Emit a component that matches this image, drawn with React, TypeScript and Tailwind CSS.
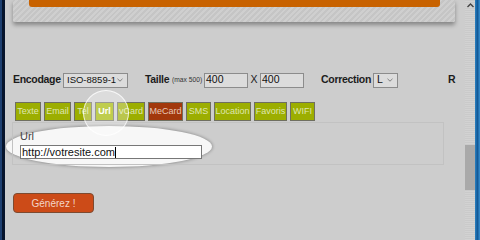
import React from "react"

const tabs = [
  { label: "Texte", w: "w-[26px]" },
  { label: "Email", w: "w-[27px]" },
  { label: "Tel", w: "w-[18px]" },
  { label: "Url", w: "w-[19px]", active: true },
  { label: "vCard", w: "w-[28px]" },
  { label: "MeCard", w: "w-[35px]", red: true },
  { label: "SMS", w: "w-[25px]" },
  { label: "Location", w: "w-[37px]" },
  { label: "Favoris", w: "w-[33px]" },
  { label: "WIFI", w: "w-[25px]" },
]

function Tab({ label, w, active, red }: { label: string; w: string; active?: boolean; red?: boolean }) {
  const color = red
    ? "bg-[#a2380c] text-[#e8c8b8]"
    : active
      ? "bg-[#a4b800] text-white font-bold"
      : "bg-[#9cae00] text-[#dfe6b0]"
  return (
    <div
      className={`${w} h-[19px] shrink-0 flex items-center justify-center border border-[#6f6f60] text-[9px] leading-none ${color}`}
    >
      {label}
    </div>
  )
}

function Chevron() {
  return (
    <svg width="6" height="4" viewBox="0 0 6 4" className="shrink-0">
      <path d="M0.5 0.8 L3 3.2 L5.5 0.8" stroke="#777" strokeWidth="0.9" fill="none" />
    </svg>
  )
}

export default function App() {
  return (
    <div className="w-[480px] h-[240px] flex overflow-hidden bg-[#cdcdcd] font-['Liberation_Sans',Arial,sans-serif]">
      {/* desktop edge */}
      <div className="w-[5px] h-full flex shrink-0">
        <div className="w-[2px] bg-[#1d3f70]" />
        <div className="w-[3px] bg-[#06142c]" />
      </div>

      <div className="relative w-[460px] shrink-0 overflow-hidden flex flex-col">
        {/* top card with submit */}
        <div className="ml-[8px] w-[442px] h-[22px] bg-[repeating-linear-gradient(135deg,#c5c5c5_0px,#c5c5c5_2px,#cfcfcf_2px,#cfcfcf_4px)] shadow-[0_3px_4px_rgba(0,0,0,0.35)] rounded-b-[2px]">
          <div className="ml-[16px] w-[411px] h-[7px] bg-[#c86200] rounded-b-[3px]" />
        </div>

        {/* options row */}
        <div className="mt-[51px] ml-[8px] h-[14px] flex items-center whitespace-nowrap text-[#1c1c1c]">
          <span className="font-bold text-[10.5px] tracking-[-0.3px] w-[50px] shrink-0">Encodage</span>
          <div className="w-[65px] h-[15px] shrink-0 border border-[#8c8c8c] bg-[#dcdcdc] flex items-center justify-between pl-[3px] pr-[4px] text-[9.5px] text-[#111]">
            <span>ISO-8859-1</span>
            <Chevron />
          </div>
          <span className="font-bold text-[10.5px] tracking-[-0.3px] ml-[17px] w-[27px] shrink-0">Taille</span>
          <span className="text-[6.7px] w-[32px] shrink-0 text-[#333]">(max 500)</span>
          <div className="w-[44px] h-[15px] shrink-0 border border-[#8c8c8c] bg-[#dcdcdc] pl-[1px] flex items-center text-[10.5px] text-[#111]">400</div>
          <span className="w-[12px] shrink-0 text-center text-[10.5px]">X</span>
          <div className="w-[44px] h-[15px] shrink-0 border border-[#8c8c8c] bg-[#dcdcdc] pl-[1px] flex items-center text-[10.5px] text-[#111]">400</div>
          <span className="font-bold text-[10.5px] tracking-[-0.3px] ml-[17px] w-[52px] shrink-0">Correction</span>
          <div className="w-[25px] h-[15px] shrink-0 border border-[#8c8c8c] bg-[#dcdcdc] flex items-center justify-between pl-[3px] pr-[4px] text-[10.5px] text-[#111]">
            <span>L</span>
            <Chevron />
          </div>
          <span className="font-bold text-[10.5px] ml-[50px]">R</span>
        </div>

        {/* spotlight ellipse (under content) */}
        <div className="absolute left-[1px] top-[126px] w-[206px] h-[41px] rounded-[50%] bg-[#f7f7f7] shadow-[0_0_3px_1px_rgba(0,0,0,0.25)] pointer-events-none" />

        {/* tabs */}
        <div className="relative mt-[15px] ml-[10px] flex gap-[3px]">
          {tabs.map((t) => (
            <Tab key={t.label} {...t} />
          ))}
        </div>

        {/* panel */}
        <div className="relative mt-[1px] ml-[7px] w-[432px] h-[43px] border border-[#c2c2c2] pl-[7px] pt-[8px]">
          <div className="text-[11px] leading-none text-[#444]">Url</div>
          <div className="mt-[3px] w-[182px] h-[14px] border border-[#777] bg-white flex items-center pl-[1px] text-[11px] text-[#111]">
            http://votresite.com<span className="w-px h-[11px] bg-black" />
          </div>
        </div>

        {/* spotlight circle (over tabs) */}
        <div className="absolute left-[78px] top-[90px] w-[46px] h-[46px] rounded-full bg-white/30 border border-white/80 pointer-events-none" />

        {/* generate */}
        <div className="mt-[28px] ml-[8px] w-[81px] h-[20px] rounded-[4px] bg-[#cc4b18] border border-[#7d4a30] flex items-center justify-center text-[10px] text-[#f3d6c8]">
          Générez !
        </div>
      </div>

      {/* scrollbar */}
      <div className="w-[10px] h-full shrink-0 flex flex-col bg-[repeating-linear-gradient(0deg,#d2d2d2_0px,#d2d2d2_1px,#cacaca_1px,#cacaca_2px)]">
        <div className="h-[10px] flex items-center justify-center text-[#444]">
          <svg width="7" height="5" viewBox="0 0 7 5">
            <path d="M0.5 4 L3.5 1 L6.5 4" stroke="#444" strokeWidth="1.4" fill="none" />
          </svg>
        </div>
        <div className="mt-[135px] h-[45px] bg-[#a9a9a9]" />
      </div>

      {/* desktop right */}
      <div className="w-[5px] h-full shrink-0 bg-[linear-gradient(90deg,#2a80c0,#135a98,#3a90d0)]" />
    </div>
  )
}
